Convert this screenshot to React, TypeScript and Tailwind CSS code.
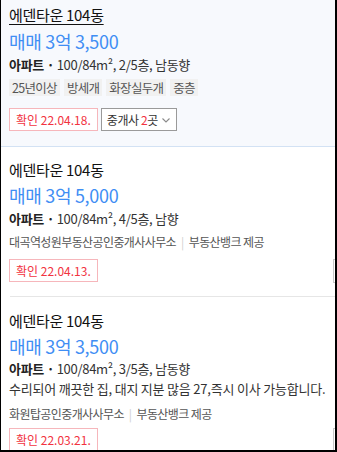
import React from "react";

function Chevron() {
  return (
    <svg width="10" height="12" viewBox="0 0 10 12" className="ml-[3px]">
      <path d="M1.5 4.5 L5 8 L8.5 4.5" fill="none" stroke="#8a8a8a" strokeWidth="1.1" />
    </svg>
  );
}

function Meta({ text }: { text: string }) {
  return (
    <div className="text-[13px] leading-[18px] text-[#333] tracking-[-0.3px] whitespace-nowrap">
      <span className="font-bold text-[#222]">아파트</span>
      <span className="font-bold text-[#222]"> · </span>
      {text}
    </div>
  );
}

function Confirm({ date }: { date: string }) {
  return (
    <div className="h-[23px] px-[6px] border border-[#f6b6bb] text-[#f2333f] text-[12px] flex items-center whitespace-nowrap bg-white">
      확인 {date}
    </div>
  );
}

function Agent({ name }: { name: string }) {
  return (
    <div className="text-[12px] leading-[17px] text-[#555] tracking-[-0.6px] whitespace-nowrap flex items-center">
      <span>{name}</span>
      <span className="mx-[5px] text-[#cfcfcf]">|</span>
      <span>부동산뱅크 제공</span>
    </div>
  );
}

export default function App() {
  return (
    <div className="w-[337px] h-[452px] overflow-hidden bg-white border-l border-r-2 border-b-2 border-black font-['Noto_Sans_CJK_KR',sans-serif]">
      {/* Card 1 */}
      <div className="bg-[#f7f9fd] px-[8px] pt-[5px] pb-[15px] border-b border-[#d3e2f4]">
        <div className="text-[15px] leading-[20px] text-[#111] underline underline-offset-[3px] tracking-[-0.3px]">에덴타운 104동</div>
        <div className="mt-[4px] text-[18px] leading-[24px] text-[#3f8ef4] tracking-[-0.3px]">매매 3억 3,500</div>
        <div className="mt-[3px]"><Meta text="100/84m², 2/5층, 남동향" /></div>
        <div className="mt-[5px] flex gap-[4px]">
          {["25년이상", "방세개", "화장실두개", "중층"].map((t) => (
            <span key={t} className="h-[17px] px-[3px] bg-[#f1f1f1] text-[#555] text-[12.5px] leading-[17px] tracking-[-0.7px] whitespace-nowrap">{t}</span>
          ))}
        </div>
        <div className="mt-[12px] flex gap-[3px]">
          <Confirm date="22.04.18." />
          <div className="h-[23px] pl-[5px] pr-[5px] border border-[#9a9a9a] bg-white text-[12px] text-[#333] flex items-center whitespace-nowrap tracking-[-0.4px]">
            <span>중개사 <span className="text-[#f2333f]">2</span>곳</span>
            <Chevron />
          </div>
        </div>
      </div>

      {/* Card 2 */}
      <div className="px-[8px] pt-[13px] pb-[13px]">
        <div className="text-[15px] leading-[20px] text-[#111] tracking-[-0.3px]">에덴타운 104동</div>
        <div className="mt-[3px] text-[18px] leading-[24px] text-[#3f8ef4] tracking-[-0.3px]">매매 3억 5,000</div>
        <div className="mt-[3px]"><Meta text="100/84m², 4/5층, 남향" /></div>
        <div className="mt-[5px]"><Agent name="대곡역성원부동산공인중개사사무소" /></div>
        <div className="mt-[9px] flex">
          <Confirm date="22.04.13." />
          <div className="ml-auto -mr-[46px] w-[40px] h-[24px] border border-[#c8c8c8] shrink-0" />
        </div>
      </div>

      <div className="ml-[9px] h-px bg-[#e6e6e6]" />

      {/* Card 3 */}
      <div className="px-[8px] pt-[14px]">
        <div className="text-[15px] leading-[20px] text-[#111] tracking-[-0.3px]">에덴타운 104동</div>
        <div className="mt-[3px] text-[18px] leading-[24px] text-[#3f8ef4] tracking-[-0.3px]">매매 3억 3,500</div>
        <div className="mt-[2px]"><Meta text="100/84m², 3/5층, 남동향" /></div>
        <div className="mt-[2px] text-[13px] leading-[18px] text-[#333] tracking-[-0.2px] whitespace-nowrap">수리되어 깨끗한 집, 대지 지분 많음 27,즉시 이사 가능합니다.</div>
        <div className="mt-[7px]"><Agent name="화원탑공인중개사사무소" /></div>
        <div className="mt-[6px] flex">
          <Confirm date="22.03.21." />
          <div className="ml-auto -mr-[46px] w-[40px] h-[24px] border border-[#c8c8c8] shrink-0" />
        </div>
      </div>
    </div>
  );
}
